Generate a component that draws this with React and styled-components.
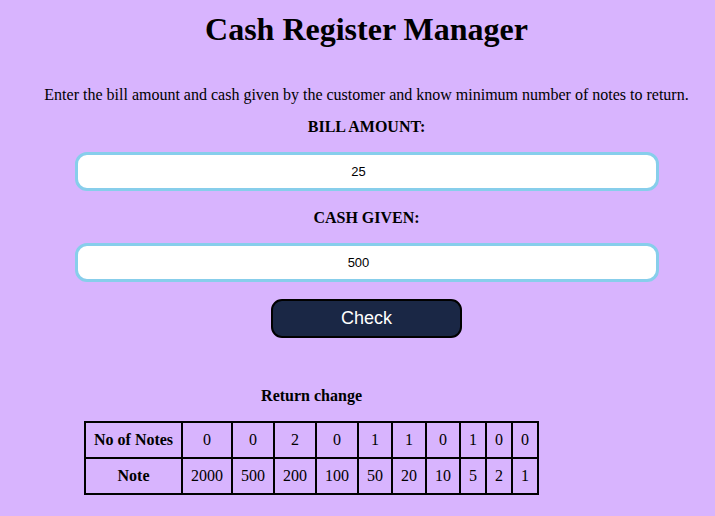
import React from "react";
import styled, { createGlobalStyle } from "styled-components";

const Global = createGlobalStyle`
  html, body { margin: 0; padding: 0; background: #d8b4fe; }
  body { font-family: "Liberation Serif", "Times New Roman", serif; color: #000; }
`;

const Page = styled.div`
  min-height: 516px;
  background: #d8b4fe;
  padding: 11px 8px 0 26px;
  box-sizing: border-box;
  display: flex;
  flex-direction: column;
  align-items: center;
`;

const Title = styled.h1`
  margin: 0;
  font-size: 32px;
  line-height: 37px;
  font-weight: bold;
`;

const Intro = styled.p`
  margin: 38px 0 0;
  font-size: 16px;
  line-height: 18px;
  white-space: nowrap;
`;

const Label = styled.label`
  margin-top: ${(p) => p.$top}px;
  font-size: 16px;
  line-height: 18px;
  font-weight: bold;
`;

const Input = styled.input`
  margin-top: 16px;
  width: 584px;
  height: 39px;
  box-sizing: border-box;
  border: 3px solid #87ceeb;
  border-radius: 12px;
  background: #fff;
  padding: 0 18px 0 2px;
  text-align: center;
  font-family: "Liberation Sans", Arial, sans-serif;
  font-size: 13px;
  color: #000;
  outline: none;
`;

const Button = styled.button`
  margin-top: 17px;
  width: 191px;
  height: 39px;
  box-sizing: border-box;
  border: 2px solid #000;
  border-radius: 11px;
  background: #1a2745;
  color: #fff;
  font-family: "Liberation Sans", Arial, sans-serif;
  font-size: 18px;
`;

const Output = styled.section`
  align-self: flex-start;
  margin: 49px 0 0 58px;
`;

const Table = styled.table`
  border-collapse: collapse;
  font-size: 16px;
`;

const Caption = styled.caption`
  font-weight: bold;
  line-height: 18px;
  padding-bottom: 16px;
`;

const Head = styled.th`
  border: 2px solid #000;
  padding: 8px;
  line-height: 18px;
  font-weight: bold;
`;

const Cell = styled.td`
  border: 2px solid #000;
  padding: 8px;
  line-height: 18px;
  text-align: center;
`;

const counts = [0, 0, 2, 0, 1, 1, 0, 1, 0, 0];
const notes = [2000, 500, 200, 100, 50, 20, 10, 5, 2, 1];

export default function App() {
  return (
    <>
      <Global />
      <Page>
        <Title>Cash Register Manager</Title>
        <Intro>
          Enter the bill amount and cash given by the customer and know minimum number of notes to return.
        </Intro>
        <Label $top={14}>BILL AMOUNT:</Label>
        <Input defaultValue="25" />
        <Label $top={18}>CASH GIVEN:</Label>
        <Input defaultValue="500" />
        <Button>Check</Button>
        <Output>
          <Table>
            <Caption>Return change</Caption>
            <tbody>
              <tr>
                <Head>No of Notes</Head>
                {counts.map((c, i) => (
                  <Cell key={i}>{c}</Cell>
                ))}
              </tr>
              <tr>
                <Head>Note</Head>
                {notes.map((n) => (
                  <Cell key={n}>{n}</Cell>
                ))}
              </tr>
            </tbody>
          </Table>
        </Output>
      </Page>
    </>
  );
}
